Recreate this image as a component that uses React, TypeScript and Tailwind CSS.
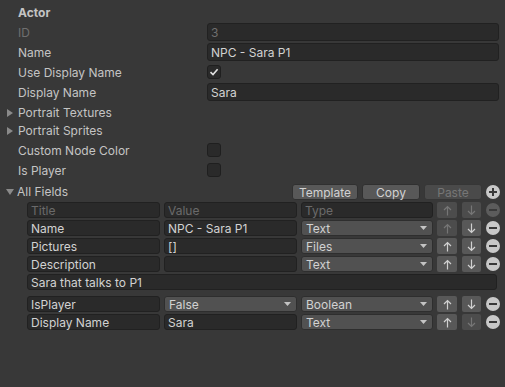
import React from "react";

const LBL = "text-[#c4c4c4]";

function Tri({ down }: { down?: boolean }) {
  return (
    <svg width="8" height="8" viewBox="0 0 8 8" className="shrink-0 mt-[2px]">
      {down ? <polygon points="0,1 8,1 4,7" fill="#8a8a8a" /> : <polygon points="1,0 7,4 1,8" fill="#8a8a8a" />}
    </svg>
  );
}

function TextField({ value, dim }: { value: string; dim?: boolean }) {
  return (
    <div className="h-[18px] w-full rounded-[3px] border border-[#212121] bg-[#2a2a2a] pl-[3px] flex items-center">
      <span className={`mt-[2px] leading-[14px] ${dim ? "text-[#6f6f6f]" : "text-[#d2d2d2]"}`}>{value}</span>
    </div>
  );
}

function Check({ checked }: { checked?: boolean }) {
  return (
    <div className="h-[14px] w-[14px] rounded-[3px] border border-[#1f1f1f] bg-[#2a2a2a] flex items-center justify-center">
      {checked && (
        <svg width="10" height="10" viewBox="0 0 10 10">
          <path d="M1.5 5.2 L4 7.6 L8.6 2.2" fill="none" stroke="#e0e0e0" strokeWidth="1.6" />
        </svg>
      )}
    </div>
  );
}

function PropRow({ label, children, dim, mb = "mb-[2px]" }: { label: string; children?: React.ReactNode; dim?: boolean; mb?: string }) {
  return (
    <div className={`flex h-[18px] items-center ${mb}`}>
      <div className={`w-[207px] pl-[18px] pt-[2px] leading-[16px] ${dim ? "text-[#6f6f6f]" : LBL}`}>{label}</div>
      <div className="w-[292px] flex items-center">{children}</div>
    </div>
  );
}

function Foldout({ label, open, mb = "" }: { label: string; open?: boolean; mb?: string }) {
  return (
    <div className={`flex h-[18px] items-center pl-[6px] ${mb}`}>
      <Tri down={open} />
      <span className={`ml-[4px] mt-[2px] leading-[16px] ${LBL}`}>{label}</span>
    </div>
  );
}

function Cell({ value, w, dim }: { value: string; w: string; dim?: boolean }) {
  return (
    <div className={`${w} h-[16px] shrink-0 rounded-[3px] border border-[#212121] bg-[#2a2a2a] pl-[3px] flex items-center`}>
      <span className={`mt-[2px] leading-[14px] ${dim ? "text-[#6a6a6a]" : "text-[#d2d2d2]"}`}>{value}</span>
    </div>
  );
}

function Drop({ value, w }: { value: string; w: string }) {
  return (
    <div className={`${w} h-[16px] shrink-0 rounded-[3px] border border-[#2e2e2e] bg-[#515151] pl-[4px] pr-[5px] flex items-center justify-between`}>
      <span className="mt-[2px] leading-[14px] text-[#d2d2d2]">{value}</span>
      <svg width="7" height="4" viewBox="0 0 7 4">
        <polygon points="0,0 7,0 3.5,4" fill="#c4c4c4" />
      </svg>
    </div>
  );
}

function Arrow({ up, enabled, w }: { up?: boolean; enabled: boolean; w: string }) {
  const c = enabled ? "#d0d0d0" : "#767676";
  return (
    <div className={`${w} h-[16px] shrink-0 rounded-[2px] flex items-center justify-center ${enabled ? "bg-[#585858]" : "bg-[#4c4c4c]"}`}>
      <svg width="9" height="11" viewBox="0 0 9 11">
        {up ? (
          <path d="M4.5 10.5 V1.5 M1 5 L4.5 1.5 L8 5" fill="none" stroke={c} strokeWidth="1.2" />
        ) : (
          <path d="M4.5 0.5 V9.5 M1 6 L4.5 9.5 L8 6" fill="none" stroke={c} strokeWidth="1.2" />
        )}
      </svg>
    </div>
  );
}

function Minus({ enabled = true }: { enabled?: boolean }) {
  return (
    <div className={`h-[14px] w-[14px] shrink-0 rounded-full flex items-center justify-center ${enabled ? "bg-[#c8c8c8]" : "bg-[#5c5c5c]"}`}>
      <div className={`h-[2px] w-[8px] ${enabled ? "bg-[#383838]" : "bg-[#3a3a3a]"}`} />
    </div>
  );
}

function Plus() {
  return (
    <div className="relative h-[14px] w-[14px] shrink-0 rounded-full bg-[#c8c8c8] flex items-center justify-center">
      <div className="h-[2px] w-[8px] bg-[#383838]" />
      <div className="absolute h-[8px] w-[2px] bg-[#383838]" />
    </div>
  );
}

function TRow({ children, mt = "" }: { children: React.ReactNode; mt?: string }) {
  return <div className={`flex h-[16px] items-center ${mt}`}>{children}</div>;
}

export default function App() {
  const rows = [
    { t: "Name", v: "NPC - Sara P1", type: "Text", up: false, down: true },
    { t: "Pictures", v: "[]", type: "Files", up: true, down: true },
    { t: "Description", v: "", type: "Text", up: true, down: true },
  ];
  return (
    <div className="w-[505px] h-[387px] overflow-hidden bg-[#383838] pt-[3px] text-[12px] [font-family:Inter,sans-serif] flex flex-col">
      <div className="h-[18px] mb-[2px] pl-[18px] pt-[2px] leading-[16px] font-bold text-[#c4c4c4]">Actor</div>
      <PropRow label="ID" dim>
        <TextField value="3" dim />
      </PropRow>
      <PropRow label="Name">
        <TextField value="NPC - Sara P1" />
      </PropRow>
      <PropRow label="Use Display Name">
        <Check checked />
      </PropRow>
      <PropRow label="Display Name">
        <TextField value="Sara" />
      </PropRow>
      <Foldout label="Portrait Textures" />
      <Foldout label="Portrait Sprites" mb="mb-[2px]" />
      <PropRow label="Custom Node Color">
        <Check />
      </PropRow>
      <PropRow label="Is Player" mb="mb-[3px]">
        <Check />
      </PropRow>
      <div className="flex h-[18px] items-end">
        <div className="h-[18px] flex items-center pl-[6px] w-[292px]">
          <Tri down />
          <span className={`ml-[3px] mt-[2px] leading-[16px] ${LBL}`}>All Fields</span>
        </div>
        <div className="flex items-center h-[16px]">
          <div className="w-[66px] h-[16px] rounded-[3px] bg-[#585858] border border-[#303030] flex items-center justify-center text-[#d2d2d2] leading-[14px] pt-[1px]">Template</div>
          <div className="ml-[4px] w-[58px] h-[16px] rounded-[3px] bg-[#585858] border border-[#303030] flex items-center justify-center text-[#d2d2d2] leading-[14px] pt-[1px]">Copy</div>
          <div className="ml-[4px] w-[58px] h-[16px] rounded-[3px] bg-[#4a4a4a] border border-[#363636] flex items-center justify-center text-[#767676] leading-[14px] pt-[1px]">Paste</div>
          <div className="ml-[4px]">
            <Plus />
          </div>
        </div>
      </div>
      <div className="mt-[2px] pl-[27px] flex flex-col gap-[2px]">
        <TRow>
          <Cell w="w-[133px]" value="Title" dim />
          <div className="w-[4px]" />
          <Cell w="w-[133px]" value="Value" dim />
          <div className="w-[4px]" />
          <Cell w="w-[132px]" value="Type" dim />
          <div className="w-[4px]" />
          <Arrow up enabled={false} w="w-[20px]" />
          <div className="w-[5px]" />
          <Arrow enabled={false} w="w-[19px]" />
          <div className="w-[5px]" />
          <Minus enabled={false} />
        </TRow>
        {rows.map((r) => (
          <TRow key={r.t}>
            <Cell w="w-[133px]" value={r.t} />
            <div className="w-[4px]" />
            <Cell w="w-[133px]" value={r.v} />
            <div className="w-[4px]" />
            <Drop w="w-[132px]" value={r.type} />
            <div className="w-[4px]" />
            <Arrow up enabled={r.up} w="w-[20px]" />
            <div className="w-[5px]" />
            <Arrow enabled={r.down} w="w-[19px]" />
            <div className="w-[5px]" />
            <Minus />
          </TRow>
        ))}
        <TRow>
          <Cell w="w-[470px]" value="Sara that talks to P1" />
        </TRow>
        <TRow mt="mt-[4px]">
          <Cell w="w-[133px]" value="IsPlayer" />
          <div className="w-[4px]" />
          <Drop w="w-[133px]" value="False" />
          <div className="w-[4px]" />
          <Drop w="w-[132px]" value="Boolean" />
          <div className="w-[4px]" />
          <Arrow up enabled w="w-[20px]" />
          <div className="w-[5px]" />
          <Arrow enabled w="w-[19px]" />
          <div className="w-[5px]" />
          <Minus />
        </TRow>
        <TRow>
          <Cell w="w-[133px]" value="Display Name" />
          <div className="w-[4px]" />
          <Cell w="w-[133px]" value="Sara" />
          <div className="w-[4px]" />
          <Drop w="w-[132px]" value="Text" />
          <div className="w-[4px]" />
          <Arrow up enabled w="w-[20px]" />
          <div className="w-[5px]" />
          <Arrow enabled={false} w="w-[19px]" />
          <div className="w-[5px]" />
          <Minus />
        </TRow>
      </div>
    </div>
  );
}
